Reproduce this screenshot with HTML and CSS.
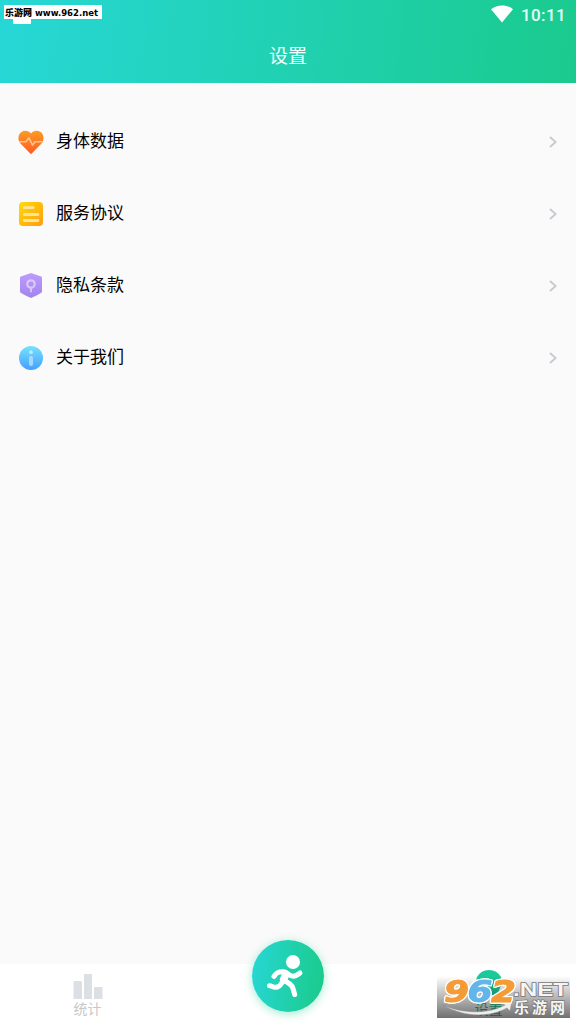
FILE: index.html
```html
<!DOCTYPE html>
<html lang="zh-CN">
<head>
  <meta charset="UTF-8">
  <meta name="viewport" content="width=device-width, initial-scale=1">
  <title>设置</title>
  <link rel="stylesheet" href="styles.css">
</head>
<body>
  <header class="header">
    <div class="status-bar">
      <svg class="wifi" viewBox="0 0 22 18"><path d="M0 4.2C6 -.9 16 -.9 22 4.2L11 17.5z" fill="#fff"/></svg>
      <span class="time">10:11</span>
    </div>
    <h1 class="title">设置</h1>
    <div class="notice"></div>
    <div class="site-tag">
      <svg width="98" height="14"><text class="tag-cn" x="1" y="11" textLength="27" lengthAdjust="spacingAndGlyphs">乐游网</text><text class="tag-url" x="31" y="11" textLength="63" lengthAdjust="spacingAndGlyphs">www.962.net</text></svg>
    </div>
  </header>

  <main class="menu">
    <div class="menu-item">
      <svg class="icon" viewBox="0 0 28 28">
        <defs><linearGradient id="heart" x1="0" y1="0" x2="0" y2="1"><stop offset="0" stop-color="#fb9c22"/><stop offset="1" stop-color="#ff5928"/></linearGradient></defs>
        <path d="M14 26.3L3.5 15.6C.4 12 1 6.5 4.4 4.1C7.5 1.9 11.6 2.4 14 5.5C16.4 2.4 20.5 1.9 23.6 4.1C27 6.5 27.6 12 24.5 15.6z" fill="url(#heart)"/>
        <path d="M2 13.7H9L12 9.8L15.5 17.2L18 13.7H26" fill="none" stroke="#ffc18c" stroke-width="1.6" stroke-linejoin="round"/>
      </svg>
      <span class="label">身体数据</span>
      <svg class="arrow" viewBox="0 0 8 12"><path d="M1 1L6.7 6L1 11"/></svg>
    </div>
    <div class="menu-item">
      <svg class="icon" viewBox="0 0 28 28">
        <defs><linearGradient id="doc" x1="0" y1="0" x2="1" y2="1"><stop offset="0" stop-color="#ffdb08"/><stop offset="1" stop-color="#ff9b11"/></linearGradient></defs>
        <rect x="2" y="2" width="24" height="24" rx="4" fill="url(#doc)"/>
        <path d="M7.3 7.7H16.2M7.3 14.5H21M7.3 20.5H21" stroke="#ffe59b" stroke-width="2.8" stroke-linecap="round"/>
      </svg>
      <span class="label">服务协议</span>
      <svg class="arrow" viewBox="0 0 8 12"><path d="M1 1L6.7 6L1 11"/></svg>
    </div>
    <div class="menu-item">
      <svg class="icon" viewBox="0 0 28 28">
        <defs><linearGradient id="shield" x1="0" y1="0" x2="0" y2="1"><stop offset="0" stop-color="#bd9cff"/><stop offset="1" stop-color="#a284ed"/></linearGradient></defs>
        <path d="M14 1L24.2 4.4Q25 4.7 25 5.6V19.2Q25 20.2 24.2 20.8C21.2 23 17.8 24.5 14 26C10.2 24.5 6.8 23 3.8 20.8Q3 20.2 3 19.2V5.6Q3 4.7 3.8 4.4z" fill="url(#shield)"/>
        <circle cx="14" cy="12" r="3.7" fill="none" stroke="#d9c7fc" stroke-width="2.3"/>
        <path d="M14 15.5V19.5" stroke="#d9c7fc" stroke-width="1.9" stroke-linecap="round"/>
      </svg>
      <span class="label">隐私条款</span>
      <svg class="arrow" viewBox="0 0 8 12"><path d="M1 1L6.7 6L1 11"/></svg>
    </div>
    <div class="menu-item">
      <svg class="icon" viewBox="0 0 28 28">
        <defs><linearGradient id="info" x1="0" y1="0" x2="0" y2="1"><stop offset="0" stop-color="#75e2fd"/><stop offset="1" stop-color="#459fff"/></linearGradient></defs>
        <circle cx="14" cy="14" r="12" fill="url(#info)"/>
        <circle cx="14" cy="8.2" r="1.9" fill="#b9edff"/>
        <path d="M14 13.7V20" stroke="#a5d9ff" stroke-width="4" stroke-linecap="round"/>
      </svg>
      <span class="label">关于我们</span>
      <svg class="arrow" viewBox="0 0 8 12"><path d="M1 1L6.7 6L1 11"/></svg>
    </div>
  </main>

  <nav class="tabbar">
    <div class="tab">
      <svg class="bars" viewBox="0 0 30 26"><path d="M.5 8.5Q.5 7 1.5 7H8Q9 7 9 8.5V25H.5zM11 1Q11 0 12 0H18Q19 0 19 1V25H11zM21 14Q21 13 22 13H28.5Q29.5 13 29.5 14V25H21z" fill="#dce0e5"/></svg>
      <span>统计</span>
    </div>
    <div class="tab tab-run">
      <div class="run">
        <svg viewBox="0 0 72 72">
          <circle cx="41" cy="22" r="7" fill="#fff"/>
          <path d="M22 36.4C24.4 32.8 26.3 31.4 31.5 31.7C36 32 37 36.3 41.2 36.2C44 36.1 46 34.6 48 33M35 34L30.2 41.8M30.2 42.2C27.8 46.5 26 47.6 23 47.3C20.5 47 19.4 45.7 17.5 45.8M32 40.5C37 43.2 39.8 44.5 40.8 48L42.7 54.5" fill="none" stroke="#fff" stroke-width="5" stroke-linecap="round" stroke-linejoin="round"/>
          <path d="M34 34L31 41" stroke="#fff" stroke-width="7.5"/>
        </svg>
      </div>
    </div>
    <div class="tab active">
      <svg class="bars" viewBox="0 0 30 26"><path d="M3 3Q7 -4 15 -4Q23 -4 27 3Q28 5 27.5 10L24 19Q22 21 20 21H10Q8 21 6 19L2.5 10Q2 5 3 3z" fill="#19ca9a"/></svg>
      <span>设置</span>
    </div>
  </nav>

  <div class="watermark">
    <svg viewBox="0 0 133 42">
      <defs><linearGradient id="mark" x1="0" y1="0" x2="0" y2="1"><stop offset="0" stop-opacity="0"/><stop offset=".5" stop-opacity=".28"/><stop offset="1" stop-opacity=".56"/></linearGradient></defs>
      <rect width="133" height="42" fill="url(#mark)"/>
      <path d="M6 29C23 37 50 39 68 29L64 27L75 25L73 35L70 32C50 43 24 40 6 29z" fill="#eee" stroke="#888" stroke-width=".5"/>
      <g class="mark-number">
        <text x="7" y="26" textLength="25" lengthAdjust="spacingAndGlyphs" fill="#f59b35" stroke="#f59b35">9</text>
        <text x="30.5" y="26" textLength="25" lengthAdjust="spacingAndGlyphs" fill="#62b5e9" stroke="#62b5e9">6</text>
        <text x="54" y="26" textLength="25" lengthAdjust="spacingAndGlyphs" fill="#f59b35" stroke="#f59b35">2</text>
      </g>
      <text class="mark-net" x="76" y="20" textLength="55" lengthAdjust="spacingAndGlyphs">.NET</text>
      <text class="mark-cn" x="77" y="37" textLength="51">乐游网</text>
    </svg>
  </div>
</body>
</html>
```
FILE: styles.css
```css
* {
  box-sizing: border-box;
}
body {
  margin: 0;
  height: 100vh;
  display: flex;
  flex-direction: column;
  overflow: hidden;
  position: relative;
  background: #fafafa;
  color: #000;
  font-family: Roboto, "Noto Sans CJK SC", sans-serif;
}
svg {
  display: block;
}
.header {
  position: relative;
  height: 83px;
  flex: none;
  background: linear-gradient(97deg, #27d7d6, #1aca8d);
}
.status-bar {
  height: 28px;
  padding: 0 10px 0 0;
  display: flex;
  justify-content: flex-end;
  align-items: center;
  gap: 8px;
}
.wifi {
  width: 22px;
  height: 18px;
}
.time {
  width: 45px;
  padding-top: 2px;
  color: #e5fff8;
  font-size: 17px;
  font-weight: 500;
  letter-spacing: .4px;
}
.title {
  margin: 0;
  color: #f0fffb;
  font-size: 19px;
  font-weight: 400;
  line-height: 58px;
  text-align: center;
}
.notice {
  position: absolute;
  left: 13px;
  top: 18px;
  width: 18px;
  height: 6px;
  background: #fff;
}
.site-tag {
  position: absolute;
  left: 4px;
  top: 5px;
  width: 98px;
  height: 14px;
  background: #fff;
}
.tag-cn {
  font: 900 9px "Noto Sans CJK SC", sans-serif;
}
.tag-url {
  font: bold 9px "DejaVu Sans", sans-serif;
}
.menu {
  flex: 1;
  padding-top: 23px;
}
.menu-item {
  height: 72px;
  padding: 0 19px 0 17px;
  display: flex;
  align-items: center;
}
.icon {
  width: 28px;
  height: 28px;
  margin-bottom: 1px;
}
.label {
  flex: 1;
  margin: -5px 0 0 11px;
  font-size: 17px;
}
.arrow {
  width: 8px;
  height: 12px;
  fill: none;
  stroke: #c5c8d0;
  stroke-width: 1.8;
}
.tabbar {
  height: 60px;
  flex: none;
  display: grid;
  grid-template-columns: 175px 1fr 175px;
  background: #fff;
}
.tab {
  display: flex;
  flex-direction: column;
  align-items: center;
  padding-top: 10px;
  color: #c8c8c8;
  font-size: 14px;
  line-height: 18px;
}
.bars {
  width: 30px;
  height: 26px;
  overflow: visible;
}
.tab-run {
  padding: 0;
}
.run {
  width: 72px;
  height: 72px;
  margin-top: -24px;
  flex: none;
  border-radius: 50%;
  background: linear-gradient(97deg, #27d7d6, #1aca87);
  box-shadow: 0 2px 10px rgba(26, 202, 145, .4);
}
.active {
  color: #19ca9a;
}
.watermark {
  position: absolute;
  left: 437px;
  top: 976px;
  width: 133px;
  height: 42px;
}
.watermark svg {
  overflow: visible;
}
.mark-number {
  font: italic bold 31px "DejaVu Sans", sans-serif;
  stroke-width: 1px;
  filter: drop-shadow(1px 0 0 #fff) drop-shadow(-1px 0 0 #fff) drop-shadow(0 1px 0 #fff) drop-shadow(0 -1px 0 #fff);
}
.mark-net,
.mark-cn {
  fill: #f5f5f5;
  stroke: #777;
  stroke-width: 1.4px;
  paint-order: stroke;
}
.mark-net {
  font: bold 19px "Liberation Sans", sans-serif;
}
.mark-cn {
  font: bold 15px "Noto Sans CJK SC", sans-serif;
}
```
